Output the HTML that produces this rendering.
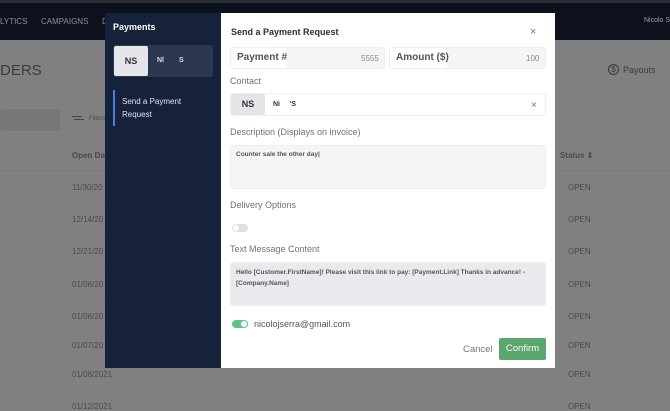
<!DOCTYPE html>
<html><head><style>
*{margin:0;padding:0;box-sizing:border-box}
body{width:670px;height:411px;overflow:hidden;background:#808080;font-family:"Liberation Sans",sans-serif;position:relative}
.a{position:absolute;white-space:nowrap}
.top{left:0;top:0;width:670px;height:40px;background:#0d111c;border-top:3px solid #2a2d35}
.nav{color:#8a8f99;font-size:8px;top:17px}
.bg{color:#4a4a4a;font-size:8px}
.line{left:0;width:670px;height:1px;background:#7a7a7a}
.side{left:105px;top:13px;width:116px;height:355px;background:#16213a}
.modal{left:221px;top:13px;width:334px;height:355px;background:#fff}
.lbl{color:#6b7280;font-size:9px}
.box{background:#f4f5f7;border:1px solid #eceef1;border-radius:3px}
</style></head><body>
<div class="a top"></div>
<div class="a nav" style="left:0">LYTICS</div>
<div class="a nav" style="left:41px">CAMPAIGNS</div>
<div class="a nav" style="left:102px">D</div>
<div class="a" style="left:644px;top:17px;color:#9aa0aa;font-size:7px">Nicolo Se</div>
<div class="a" style="left:0;top:62px;font-size:15px;color:#3a3a3a">DERS</div>
<div class="a" style="left:608px;top:64px;width:11px;height:11px;border:1px solid #3a3a3a;border-radius:50%;font-size:8px;text-align:center;line-height:9px;color:#3a3a3a">$</div>
<div class="a" style="left:623px;top:65px;font-size:9px;color:#3a3a3a">Payouts</div>
<div class="a line" style="top:100px"></div>
<div class="a" style="left:0;top:109px;width:60px;height:22px;background:#777;border-radius:3px"></div>
<div class="a" style="left:72px;top:116px;width:10px;height:1px;background:#444;box-shadow:2px 3px 0 -0px #444"></div>
<div class="a bg" style="left:89px;top:116px;font-size:6px">Filters</div>
<div class="a bg" style="left:72px;top:151px;font-weight:bold">Open Date</div>
<div class="a bg" style="left:560px;top:151px;font-weight:bold">Status ⇕</div>
<div class="a line" style="top:170px"></div>
<div class="a bg" style="left:72px;top:183px">11/30/20</div><div class="a bg" style="left:568px;top:183px">OPEN</div>
<div class="a line" style="top:203px"></div>
<div class="a bg" style="left:72px;top:215px">12/14/20</div><div class="a bg" style="left:568px;top:215px">OPEN</div>
<div class="a line" style="top:235px"></div>
<div class="a bg" style="left:72px;top:247px">12/21/20</div><div class="a bg" style="left:568px;top:247px">OPEN</div>
<div class="a line" style="top:267px"></div>
<div class="a bg" style="left:72px;top:280px">01/06/20</div><div class="a bg" style="left:568px;top:280px">OPEN</div>
<div class="a line" style="top:299px"></div>
<div class="a bg" style="left:72px;top:312px">01/06/20</div><div class="a bg" style="left:568px;top:312px">OPEN</div>
<div class="a line" style="top:331px"></div>
<div class="a bg" style="left:72px;top:341px">01/07/20</div><div class="a bg" style="left:568px;top:341px">OPEN</div>
<div class="a bg" style="left:72px;top:370px">01/08/2021</div><div class="a bg" style="left:568px;top:370px">OPEN</div>
<div class="a line" style="top:390px"></div>
<div class="a bg" style="left:72px;top:402px">01/12/2021</div><div class="a bg" style="left:568px;top:402px">OPEN</div>

<div class="a side"></div>
<div class="a" style="left:113px;top:22px;color:#fff;font-size:9px;font-weight:bold">Payments</div>
<div class="a" style="left:113px;top:45px;width:100px;height:32px;background:#2d3850;border-radius:3px"></div>
<div class="a" style="left:114px;top:46px;width:34px;height:30px;background:#e4e6ea;border-radius:2px;color:#333;font-size:9px;font-weight:bold;text-align:center;line-height:30px">NS</div>
<div class="a" style="left:157px;top:57px;color:#ddd;font-size:7px;font-weight:bold">Nl</div>
<div class="a" style="left:179px;top:57px;color:#ddd;font-size:7px;font-weight:bold">S</div>
<div class="a" style="left:113px;top:90px;width:2px;height:36px;background:#4a7fe0"></div>
<div class="a" style="left:122px;top:95px;color:#dfe3ea;font-size:8px;line-height:13px">Send a Payment<br>Request</div>

<div class="a modal"></div>
<div class="a" style="left:231px;top:27px;font-size:9px;font-weight:bold;color:#2a2f3a">Send a Payment Request</div>
<div class="a" style="left:530px;top:26px;font-size:11px;color:#777">×</div>
<div class="a box" style="left:230px;top:47px;width:155px;height:22px;background:#fff"></div>
<div class="a" style="left:286px;top:48px;width:98px;height:20px;background:#f4f5f7"></div>
<div class="a" style="left:237px;top:52px;font-size:10px;color:#555;font-weight:bold">Payment #</div>
<div class="a" style="left:361px;top:54px;font-size:8px;color:#888">5555</div>
<div class="a box" style="left:389px;top:47px;width:157px;height:22px;background:#fff"></div>
<div class="a" style="left:447px;top:48px;width:98px;height:20px;background:#f4f5f7"></div>
<div class="a" style="left:396px;top:52px;font-size:10px;color:#555;font-weight:bold">Amount ($)</div>
<div class="a" style="left:526px;top:54px;font-size:8px;color:#888">100</div>
<div class="a lbl" style="left:230px;top:76px">Contact</div>
<div class="a box" style="left:230px;top:93px;width:316px;height:23px;background:#fff"></div>
<div class="a" style="left:231px;top:94px;width:34px;height:21px;background:#e3e5e8;border-radius:2px;font-size:9px;color:#333;font-weight:bold;text-align:center;line-height:21px">NS</div>
<div class="a" style="left:273px;top:101px;font-size:7px;color:#333;font-weight:bold">Ni&nbsp;&nbsp;&nbsp;&nbsp;&nbsp;'S</div>
<div class="a" style="left:531px;top:100px;font-size:10px;color:#777">×</div>
<div class="a lbl" style="left:230px;top:127px">Description (Displays on invoice)</div>
<div class="a box" style="left:230px;top:145px;width:316px;height:44px"></div>
<div class="a" style="left:236px;top:151px;font-size:6.5px;color:#555;font-weight:bold">Counter sale the other day|</div>
<div class="a lbl" style="left:230px;top:200px">Delivery Options</div>
<div class="a" style="left:232px;top:224px;width:16px;height:8px;border-radius:4px;background:#dfe1e5"></div>
<div class="a" style="left:233px;top:225px;width:6px;height:6px;border-radius:50%;background:#fff"></div>
<div class="a lbl" style="left:230px;top:244px">Text Message Content</div>
<div class="a box" style="left:230px;top:262px;width:316px;height:44px;background:#e8eaed"></div>
<div class="a" style="left:236px;top:267px;width:300px;white-space:normal;font-size:6.5px;color:#555;font-weight:bold;line-height:11px">Hello [Customer.FirstName]! Please visit this link to pay: [Payment.Link] Thanks in advance! -[Company.Name]</div>
<div class="a" style="left:232px;top:320px;width:16px;height:8px;border-radius:4px;background:#5cc48a"></div>
<div class="a" style="left:241px;top:321px;width:6px;height:6px;border-radius:50%;background:#fff"></div>
<div class="a" style="left:254px;top:319px;font-size:9px;color:#555">nicolojserra@gmail.com</div>
<div class="a" style="left:463px;top:344px;font-size:9.5px;color:#777">Cancel</div>
<div class="a" style="left:499px;top:338px;width:47px;height:22px;background:#5ba56e;border-radius:2px;color:#fff;font-size:9.5px;text-align:center;line-height:22px">Confirm</div>
</body></html>
